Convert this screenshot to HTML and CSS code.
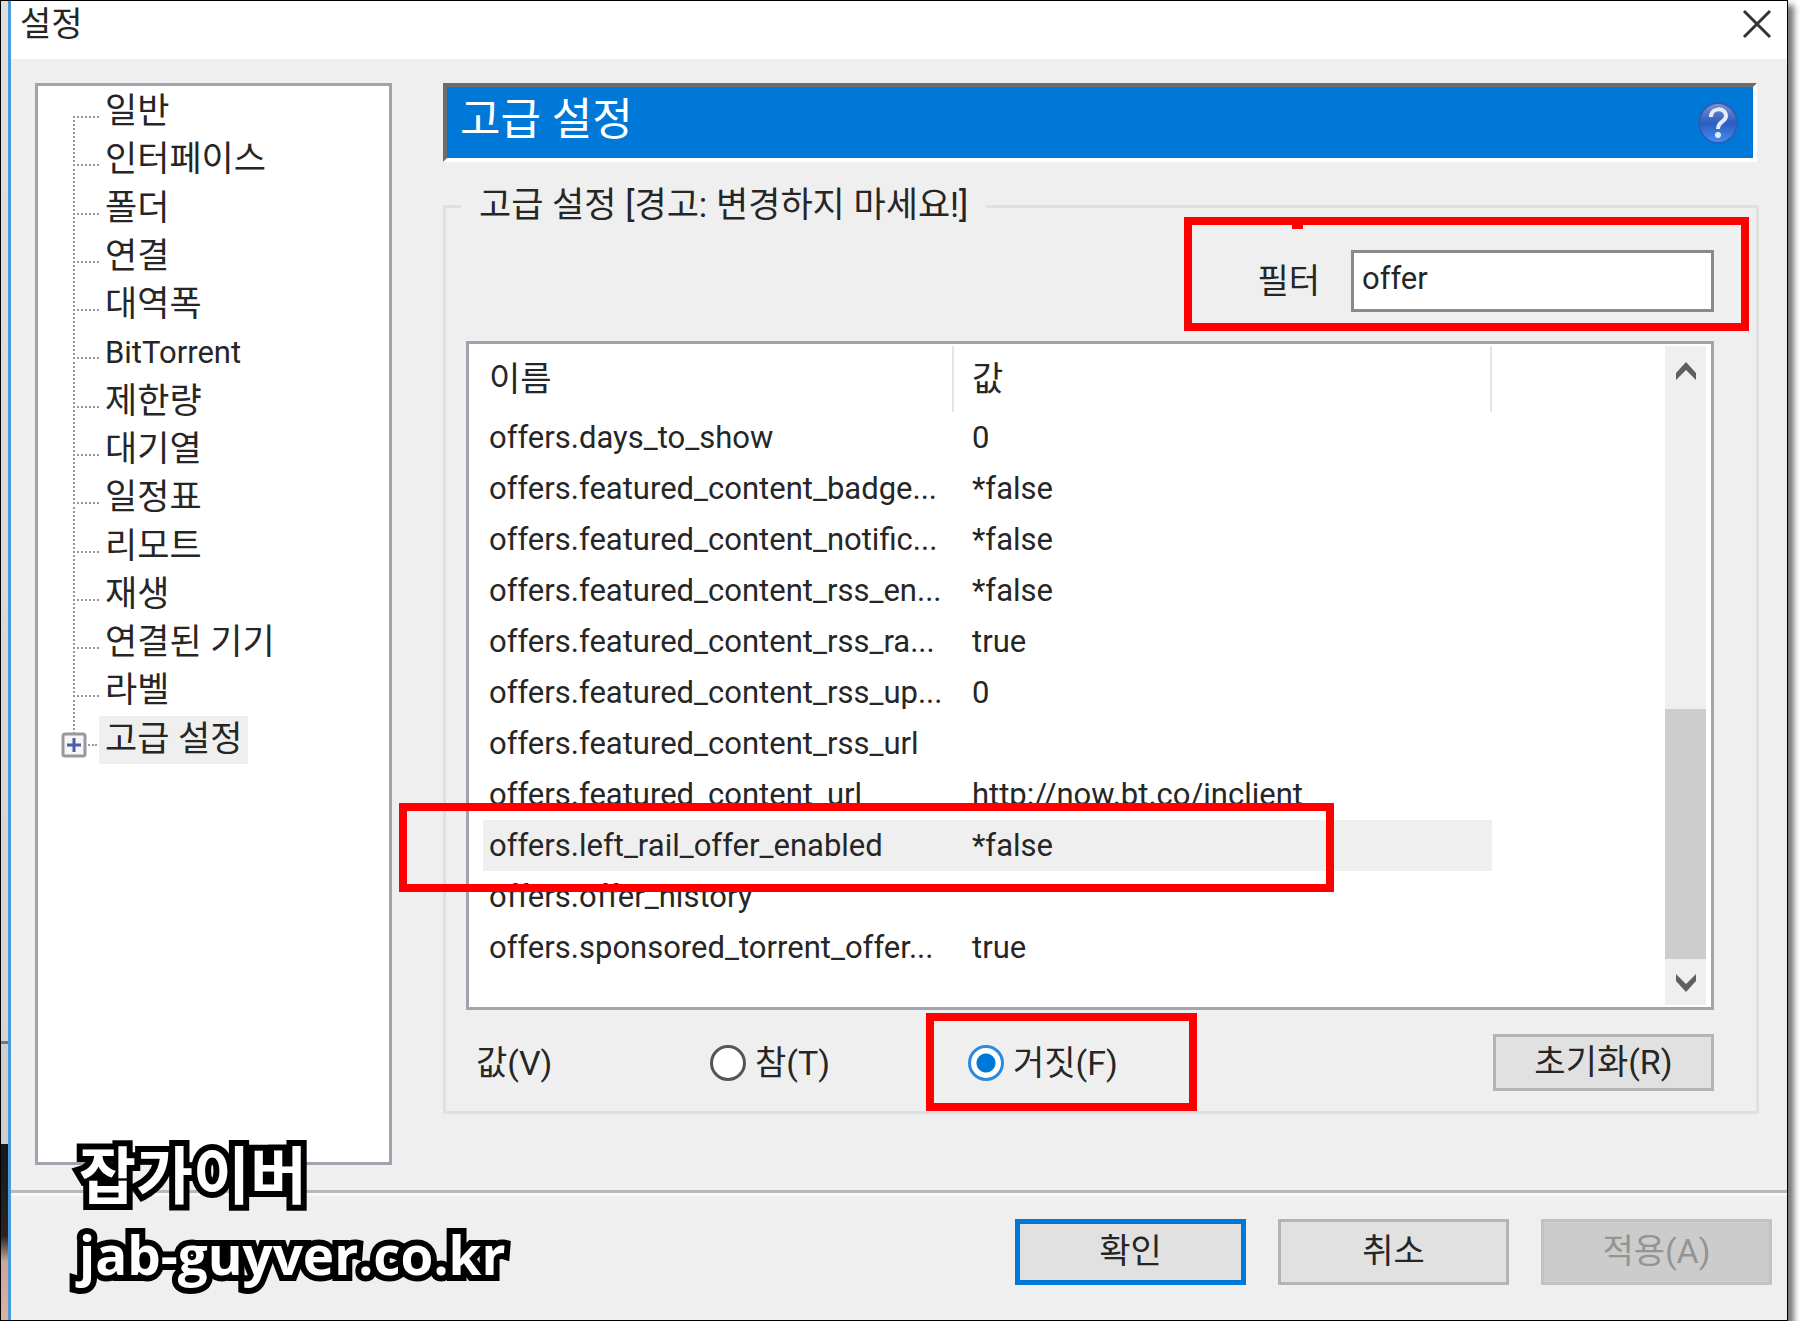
FILE: index.html
```html
<!DOCTYPE html>
<html lang="ko">
<head>
    <meta charset="UTF-8">
    <title>설정</title>
    <link rel="stylesheet" href="styles.css">
</head>

<body>
    <div class="screen">
        <!-- 뒤쪽 창이 보이는 부분 -->
        <div class="behind"></div>

        <div class="dialog">
            <!-- 제목 표시줄 -->
            <div class="titlebar">
                <h1>설정</h1>
                <button type="button" class="close" aria-label="닫기">
                    <svg width="30" height="30" viewBox="0 0 30 30"><path d="M2 2 L28 28 M28 2 L2 28" stroke="#333" stroke-width="3" fill="none"/></svg>
                </button>
            </div>

            <div class="content">
                <!-- 왼쪽 트리 -->
                <nav class="tree">
                    <ul>
                        <li><a href="#">일반</a></li>
                        <li><a href="#">인터페이스</a></li>
                        <li><a href="#">폴더</a></li>
                        <li><a href="#">연결</a></li>
                        <li><a href="#">대역폭</a></li>
                        <li><a href="#" class="latin">BitTorrent</a></li>
                        <li><a href="#">제한량</a></li>
                        <li><a href="#">대기열</a></li>
                        <li><a href="#">일정표</a></li>
                        <li><a href="#">리모트</a></li>
                        <li><a href="#">재생</a></li>
                        <li><a href="#">연결된 기기</a></li>
                        <li><a href="#">라벨</a></li>
                        <li class="last">
                            <svg class="expand" width="26" height="26" viewBox="0 0 26 26"><rect x="2" y="2" width="22" height="22" rx="2" fill="#f6f6f6" stroke="#999" stroke-width="3"/><path d="M6 13 H20 M13 6 V20" stroke="#4a5da8" stroke-width="3"/></svg>
                            <a href="#" class="selected">고급 설정</a>
                        </li>
                    </ul>
                </nav>

                <!-- 오른쪽 패널 -->
                <main class="panel">
                    <div class="banner">
                        <h2>고급 설정</h2>
                        <button type="button" class="help" aria-label="도움말">
                            <svg width="42" height="44" viewBox="0 0 42 44">
                                <defs>
                                    <linearGradient id="ball" x1="0" y1="0" x2="0" y2="1">
                                        <stop offset="0" stop-color="#7f93cc"/>
                                        <stop offset="0.5" stop-color="#2c5cc0"/>
                                        <stop offset="1" stop-color="#3f92f0"/>
                                    </linearGradient>
                                </defs>
                                <ellipse cx="21" cy="22" rx="19" ry="20" fill="url(#ball)" stroke="#2a5db8" stroke-width="2"/>
                                <path d="M14 16 C14 6 29 6 29 15 C29 21 21 20 21 28" fill="none" stroke="#e4ecfa" stroke-width="4"/>
                                <circle cx="21" cy="34" r="3" fill="#e4ecfa"/>
                            </svg>
                        </button>
                    </div>

                    <fieldset class="group">
                        <legend>고급 설정 [경고: 변경하지 마세요!]</legend>

                        <div class="filter">
                            <label for="filter">필터</label>
                            <input type="text" id="filter" value="offer">
                            <span class="mark mark-filter"></span>
                        </div>

                        <!-- 설정 목록 -->
                        <div class="list">
                            <table>
                                <colgroup>
                                    <col class="col-name">
                                    <col class="col-value">
                                </colgroup>
                                <thead>
                                    <tr><th>이름</th><th>값</th></tr>
                                </thead>
                                <tbody>
                                    <tr><td>offers.days_to_show</td><td>0</td></tr>
                                    <tr><td>offers.featured_content_badge...</td><td>*false</td></tr>
                                    <tr><td>offers.featured_content_notific...</td><td>*false</td></tr>
                                    <tr><td>offers.featured_content_rss_en...</td><td>*false</td></tr>
                                    <tr><td>offers.featured_content_rss_ra...</td><td>true</td></tr>
                                    <tr><td>offers.featured_content_rss_up...</td><td>0</td></tr>
                                    <tr><td>offers.featured_content_rss_url</td><td></td></tr>
                                    <tr><td>offers.featured_content_url</td><td>http://now.bt.co/inclient</td></tr>
                                    <tr class="current"><td>offers.left_rail_offer_enabled<span class="mark mark-row"></span></td><td>*false</td></tr>
                                    <tr><td>offers.offer_history</td><td></td></tr>
                                    <tr><td>offers.sponsored_torrent_offer...</td><td>true</td></tr>
                                </tbody>
                            </table>
                            <div class="scrollbar">
                                <svg width="22" height="20" viewBox="0 0 22 20"><path d="M1 19 V12 L11 1 L21 12 V19 L11 9 Z" fill="#606060"/></svg>
                                <div class="thumb"></div>
                                <svg width="22" height="20" viewBox="0 0 22 20"><path d="M1 1 V8 L11 19 L21 8 V1 L11 11 Z" fill="#606060"/></svg>
                            </div>
                        </div>

                        <!-- 값 선택 -->
                        <div class="values">
                            <span class="values-label">값(V)</span>
                            <label class="radio"><input type="radio" name="value">참(T)</label>
                            <label class="radio"><input type="radio" name="value" checked>거짓(F)<span class="mark mark-radio"></span></label>
                            <button type="button" class="btn reset">초기화(R)</button>
                        </div>
                    </fieldset>
                </main>
            </div>

            <!-- 하단 버튼 -->
            <div class="actions">
                <button type="button" class="btn default">확인</button>
                <button type="button" class="btn">취소</button>
                <button type="button" class="btn" disabled>적용(A)</button>
            </div>
        </div>

        <!-- 워터마크 -->
        <div class="watermark">
            <p>잡가이버</p>
            <p class="site">jab-guyver.co.kr</p>
        </div>
    </div>
</body>
</html>
```
FILE: styles.css
```css
* {
    box-sizing: border-box;
}

body {
    margin: 0;
    background: #fff;
    color: #262626;
    font-family: Roboto, "Noto Sans CJK KR", sans-serif;
    font-size: 34px;
    line-height: 48px;
}

h1,
h2,
p,
ul {
    margin: 0;
    padding: 0;
    font-weight: normal;
    font-size: 34px;
}

button,
input {
    font: inherit;
    color: inherit;
    margin: 0;
}

/* 화면 전체 */
.screen {
    position: relative;
    display: flex;
    min-height: calc(100vh - 12px);
    margin-right: 12px;
    border: 1px solid #000;
    box-shadow: 5px 6px 6px 1px #77777c;
}

.behind {
    width: 7px;
    background: linear-gradient(#e2dede 0, #d8d4d4 1040px, #777 1040px, #777 1043px, #d2cece 1043px, #d2cece 1143px, #14191b 1143px, #2b2322 1235px, #c9a698 1260px, #d8b4a4);
}

.dialog {
    flex: 1;
    display: flex;
    flex-direction: column;
    border-left: 3px solid #4a9ade;
    background: #efefef;
}

/* 제목 표시줄 */
.titlebar {
    display: flex;
    justify-content: space-between;
    align-items: flex-start;
    height: 58px;
    padding: 0 15px 0 9px;
    background: #fff;
}

.titlebar h1 {
    line-height: 46px;
}

.close,
.help {
    padding: 0;
    border: none;
    background: none;
}

.close {
    margin-top: 8px;
    line-height: 0;
}

.content {
    flex: 1;
    display: flex;
    gap: 51px;
    padding: 24px 28px 25px 24px;
}

/* 트리 */
.tree {
    width: 357px;
    padding: 2px 0 0 35px;
    border: 3px solid #a0a4ac;
    background: #fff;
    font-size: 35px;
}

.tree ul {
    display: grid;
    grid-auto-rows: 1fr;
    height: 676px;
    font-size: 35px;
    list-style: none;
}

.tree li {
    position: relative;
    padding-left: 26px;
    white-space: nowrap;
}

/* 점선 연결 */
.tree li::before {
    content: "";
    position: absolute;
    left: 0;
    top: 28px;
    width: 24px;
    height: 100%;
    border-top: 2px dotted #999;
    border-left: 2px dotted #999;
}

.tree li.last::before {
    border-left: none;
}

.tree a {
    display: block;
    width: fit-content;
    padding: 0 6px;
    color: inherit;
    text-decoration: none;
}

.tree .latin {
    font-size: 31px;
}

.tree .selected {
    background: #efefef;
}

.expand {
    position: absolute;
    left: -12px;
    top: 16px;
}

/* 오른쪽 패널 */
.panel {
    flex: 1;
    display: flex;
    flex-direction: column;
    gap: 20px;
}

.banner {
    display: flex;
    justify-content: space-between;
    align-items: center;
    height: 79px;
    margin-right: 2px;
    padding: 0 14px 0 13px;
    border: 4px solid #fff;
    border-top-color: #6c6c6c;
    border-left-color: #6c6c6c;
    background: #0078d7;
    color: #fff;
}

.banner h2 {
    font-size: 44px;
    padding-bottom: 6px;
}

.help {
    line-height: 0;
}

/* 그룹 상자 */
.group {
    min-width: 0;
    margin: 0;
    padding: 0 42px 20px 20px;
    border: 3px solid #e0e0e0;
}

.group legend {
    margin-left: -5px;
    padding: 0 18px;
    font-size: 35px;
}

.filter {
    position: relative;
    display: flex;
    justify-content: flex-end;
    align-items: center;
    gap: 31px;
    margin: 20px 0 29px;
}

.filter input {
    width: 363px;
    height: 62px;
    padding: 0 8px 6px;
    border: 3px solid #8a8a8a;
    border-radius: 0;
    background: #fff;
    font-size: 31px;
}

/* 목록 */
.list {
    display: flex;
    justify-content: space-between;
    height: 669px;
    padding: 2px 5px 2px 14px;
    border: 3px solid #a0a4ac;
    background: #fff;
}

table {
    table-layout: fixed;
    width: 1009px;
    border-collapse: separate;
    border-spacing: 0;
    align-self: flex-start;
}

.col-name {
    width: 471px;
}

th {
    height: 66px;
    padding: 0 0 0 6px;
    border-right: 2px solid #e4e4e4;
    font-weight: normal;
    text-align: left;
}

td {
    height: 51px;
    padding: 0 0 0 6px;
    font-size: 31px;
    white-space: nowrap;
}

th + th,
td + td {
    padding-left: 18px;
}

.current {
    position: relative;
    background: #efefef;
}

.scrollbar {
    display: flex;
    flex-direction: column;
    align-items: center;
    width: 41px;
    padding: 15px 0 12px;
    background: #efefef;
}

.thumb {
    width: 100%;
    height: 250px;
    margin: auto 0 14px;
    background: #cdcdcd;
}

/* 값 선택 */
.values {
    display: grid;
    grid-template-columns: 234px 258px 1fr auto;
    align-items: center;
    margin-top: 24px;
    padding-left: 10px;
}

.radio {
    position: relative;
    display: flex;
    align-items: center;
    gap: 9px;
    justify-self: start;
}

.radio input {
    appearance: none;
    width: 36px;
    height: 36px;
    border: 3px solid #555;
    border-radius: 50%;
    background: #fff;
}

.radio input:checked {
    border-color: #2a8ade;
    background: radial-gradient(circle, #0078d7 9px, #fff 10px);
}

/* 버튼 */
.btn {
    width: 231px;
    height: 66px;
    padding: 0 0 2px;
    border: 3px solid #b4b4b4;
    border-radius: 0;
    background: #e1e1e1;
}

.btn.reset {
    width: 221px;
    height: 57px;
}

.btn.default {
    border: 5px solid #0078d7;
}

.btn:disabled {
    border-color: #c2c2c2;
    background: #cccccc;
    color: #949494;
}

.actions {
    display: flex;
    justify-content: flex-end;
    gap: 32px;
    padding: 26px 15px 35px;
    border-top: 3px solid #b8b8b8;
    box-shadow: inset 0 3px #f8f8f8;
}

/* 빨간 강조 상자 */
.mark {
    position: absolute;
    border: 8px solid #f00;
    pointer-events: none;
}

.mark-filter {
    top: -33px;
    right: -35px;
    width: 565px;
    height: 114px;
}

.mark-filter::after {
    content: "";
    position: absolute;
    left: 100px;
    top: 0;
    width: 11px;
    height: 4px;
    background: #f00;
}

.mark-row {
    left: -84px;
    top: -17px;
    width: 935px;
    height: 89px;
}

.mark-radio {
    left: -42px;
    top: -26px;
    width: 271px;
    height: 98px;
}

/* 워터마크 */
.watermark {
    position: absolute;
    left: 78px;
    bottom: 25px;
    color: #fff;
    font-family: "Open Sans", "Noto Sans CJK KR", sans-serif;
    -webkit-text-stroke: 12px #000;
    paint-order: stroke fill;
    stroke-linejoin: round;
}

.watermark p {
    font-size: 62px;
    font-weight: bold;
    line-height: 80px;
}

.watermark .site {
    font-size: 53px;
}
```
